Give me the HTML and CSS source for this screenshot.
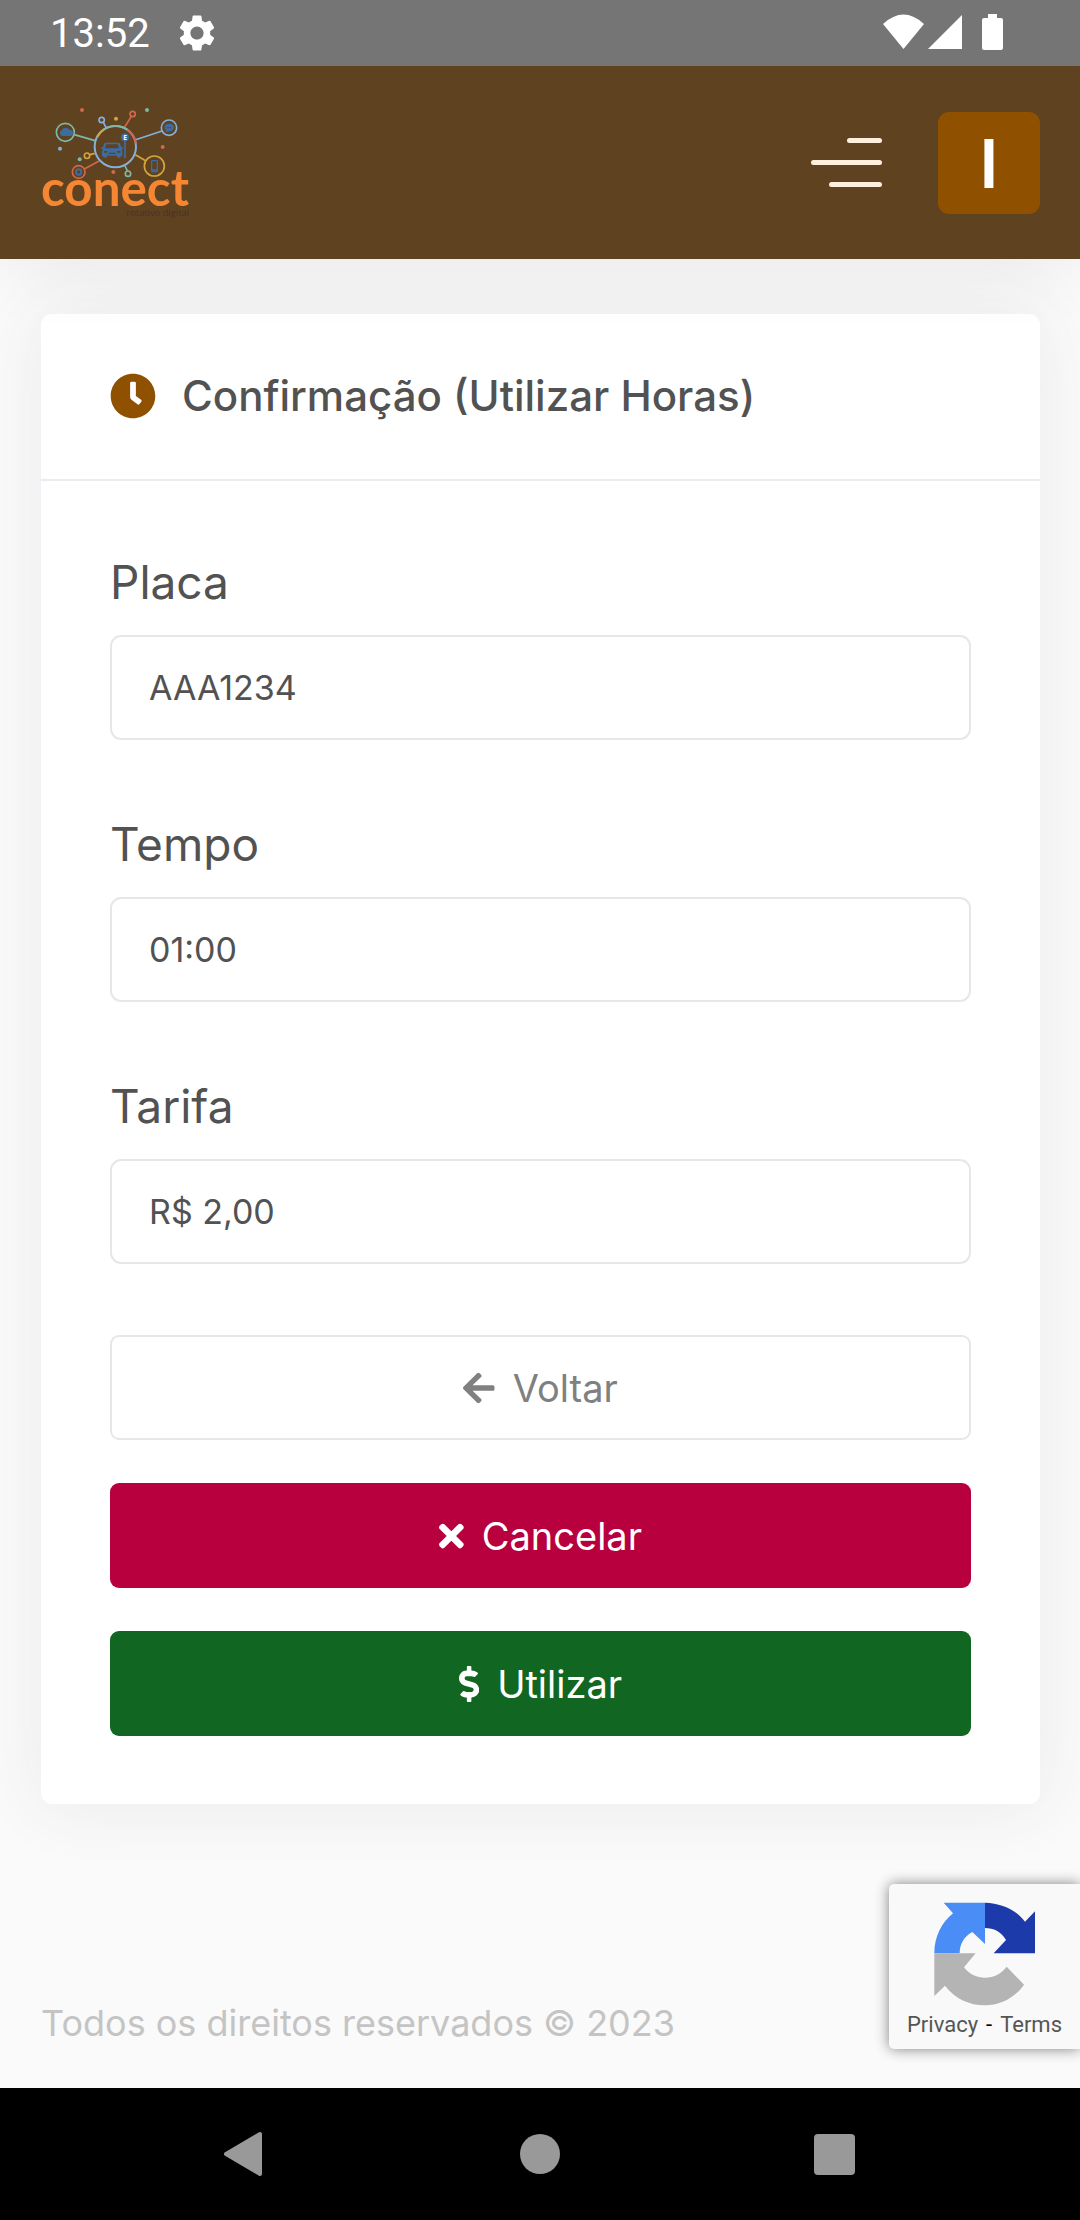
FILE: index.html
```html
<!DOCTYPE html>
<html lang="pt-BR">

<head>
    <meta charset="UTF-8">
    <meta name="viewport" content="width=device-width, initial-scale=1.0">
    <title>Conect - Utilizar Horas</title>
    <link rel="stylesheet" href="styles.css">
</head>

<body>
    <div class="status-bar">
        <span class="status-time">13:52</span>
        <svg class="status-gear" viewBox="0 0 24 24" fill="#fff"><path d="M19.14 12.94c.04-.3.06-.61.06-.94 0-.32-.02-.64-.07-.94l2.03-1.58c.18-.14.23-.41.12-.61l-1.92-3.32c-.12-.22-.37-.29-.59-.22l-2.39.96c-.5-.38-1.03-.7-1.62-.94l-.36-2.54c-.04-.24-.24-.41-.48-.41h-3.84c-.24 0-.43.17-.47.41l-.36 2.54c-.59.24-1.13.57-1.62.94l-2.39-.96c-.22-.08-.47 0-.59.22L2.74 8.87c-.12.21-.08.47.12.61l2.03 1.58c-.05.3-.09.63-.09.94s.02.64.07.94l-2.03 1.58c-.18.14-.23.41-.12.61l1.92 3.32c.12.22.37.29.59.22l2.39-.96c.5.38 1.03.7 1.62.94l.36 2.54c.05.24.24.41.48.41h3.84c.24 0 .44-.17.47-.41l.36-2.54c.59-.24 1.13-.56 1.62-.94l2.39.96c.22.08.47 0 .59-.22l1.92-3.32c.12-.22.07-.47-.12-.61l-2.01-1.58zM12 15.6c-1.98 0-3.6-1.62-3.6-3.6s1.62-3.6 3.6-3.6 3.6 1.62 3.6 3.6-1.62 3.6-3.6 3.6z"/></svg>
        <svg class="status-icons" viewBox="0 0 122 38" fill="#fff">
            <path d="M0 10Q20.500-9 41 10L20.500 35z"/>
            <path d="M79 1v34H45z"/>
            <path d="M105 0h9v4h4q2 0 2 2v28q0 2-2 2h-17q-2 0-2-2V6q0-2 2-2h4z"/>
        </svg>
    </div>

    <header class="header">
        <a class="logo" href="#" aria-label="Conect rotativo digital">
            <svg viewBox="33 48 444 336" fill="none">
                <g stroke-width="5">
                    <g stroke="#7fb8a4">
                        <path d="M133 131l62 18M285 225l7 14"/>
                        <circle cx="106" cy="124" r="27"/>
                        <circle cx="294" cy="248" r="8"/>
                    </g>
                    <g stroke="#85b0dc">
                        <path d="M228 109l-8-15M317 146l79-26"/>
                        <circle cx="215" cy="87" r="8"/>
                        <circle cx="417" cy="110" r="23"/>
                    </g>
                    <g stroke="#cf684c">
                        <path d="M284 108l20-32M207 210l-44 24"/>
                        <circle cx="308" cy="69" r="8"/>
                        <circle cx="146" cy="243" r="19"/>
                    </g>
                    <g stroke="#d3a53c">
                        <path d="M194 187l-14 4M316 191l31 18"/>
                        <circle cx="171" cy="194" r="8"/>
                        <circle cx="373" cy="225" r="30"/>
                    </g>
                </g>
                <g stroke-width="6">
                    <circle cx="256" cy="167" r="62" stroke="#85b0dc"/>
                    <path d="M202 137A62 62 0 0 1 222 115" stroke="#d3a53c"/>
                    <path d="M222 115A62 62 0 0 1 292 116" stroke="#7fb8a4"/>
                    <path d="M292 116A62 62 0 0 1 317 157" stroke="#cf684c"/>
                </g>
                <circle cx="156" cy="57" r="6" fill="#cf684c"/>
                <circle cx="398" cy="168" r="6" fill="#cf684c"/>
                <circle cx="250" cy="243" r="6" fill="#cf684c"/>
                <circle cx="351" cy="57" r="6" fill="#7fb8a4"/>
                <circle cx="149" cy="205" r="6" fill="#7fb8a4"/>
                <circle cx="258" cy="83" r="6" fill="#d3a53c"/>
                <circle cx="90" cy="173" r="6" fill="#85b0dc"/>
                <!-- cloud, chat, camera, phone -->
                <path d="M97 135a9 9 0 0 1-2-17 13 13 0 0 1 23-2 9 9 0 0 1 2 19z" fill="#3d6ca3"/>
                <path d="M417 98c9 0 15 5 15 11s-6 12-15 12l-10 3 1-6c-9-9-3-20 9-20z" fill="#3d6ca3"/>
                <path d="M410 110h14" stroke="#5f4220" stroke-width="3" stroke-dasharray="3 2"/>
                <circle cx="146" cy="243" r="8" stroke="#3d6ca3" stroke-width="6"/>
                <rect x="365" y="209" width="17" height="33" rx="2" stroke="#3d6ca3" stroke-width="4"/>
                <path d="M365 237h17" stroke="#3d6ca3" stroke-width="5"/>
                <!-- car and parking sign -->
                <path fill="#3d6ca3" fill-rule="evenodd" d="M224 155h44l7 14h4v6h-4l2 7v14h-6v4h-9v-6h-32v6h-9v-4h-5v-14l3-7h-5v-6h4zM229 160l-4 12h42l-4-12zM222 180v5h9v-5zM262 180v5h9v-5zM235 185v4h22v-4z"/>
                <path d="M285 140v62" stroke="#3d6ca3" stroke-width="5"/>
                <circle cx="285" cy="139" r="12" fill="#3d6ca3"/>
                <text class="logo-sign" x="285" y="146" text-anchor="middle">E</text>
                <text class="logo-name" x="477" y="346" text-anchor="end">conect</text>
                <text class="logo-sub" x="477" y="375" text-anchor="end">rotativo digital</text>
            </svg>
        </a>
        <div class="header-actions">
            <button class="menu-btn" type="button" aria-label="Menu">
                <span class="line short"></span>
                <span class="line"></span>
                <span class="line medium"></span>
            </button>
            <button class="user-btn" type="button">I</button>
        </div>
    </header>

    <main class="content">
        <form class="card">
            <div class="card-header">
                <svg class="clock" viewBox="0 0 512 512" fill="#8f5000"><path d="M256,8C119,8,8,119,8,256S119,504,256,504,504,393,504,256,393,8,256,8Zm92.490,313h0l-20,25a16,16,0,0,1-22.490,2.500h0l-67-49.720a40,40,0,0,1-15-31.230V112a16,16,0,0,1,16-16h32a16,16,0,0,1,16,16V256l58,42.500A16,16,0,0,1,348.490,321Z"/></svg>
                <h1>Confirmação (Utilizar Horas)</h1>
            </div>
            <div class="card-body">
                <div class="field">
                    <label for="placa">Placa</label>
                    <input type="text" id="placa" value="AAA1234" readonly>
                </div>
                <div class="field">
                    <label for="tempo">Tempo</label>
                    <input type="text" id="tempo" value="01:00" readonly>
                </div>
                <div class="field">
                    <label for="tarifa">Tarifa</label>
                    <input type="text" id="tarifa" value="R$ 2,00" readonly>
                </div>
                <div class="actions">
                    <button class="btn btn-back" type="button">
                        <svg viewBox="0 0 448 512" fill="currentColor"><path d="M257.500 445.100l-22.200 22.200c-9.400 9.400-24.600 9.400-33.900 0L7 273c-9.400-9.400-9.400-24.600 0-33.900L201.400 44.700c9.400-9.400 24.600-9.400 33.900 0l22.200 22.200c9.500 9.500 9.300 25-.4 34.300L136.600 216H424c13.300 0 24 10.700 24 24v32c0 13.300-10.700 24-24 24H136.600l120.500 114.800c9.800 9.300 10 24.800.4 34.300z"/></svg>
                        Voltar
                    </button>
                    <button class="btn btn-cancel" type="button">
                        <svg viewBox="0 0 352 512" fill="currentColor"><path d="M242.720 256l100.070-100.070c12.280-12.280 12.280-32.190 0-44.480l-22.240-22.240c-12.280-12.280-32.190-12.280-44.480 0L176 189.280 75.930 89.210c-12.280-12.280-32.190-12.280-44.480 0L9.210 111.450c-12.280 12.280-12.280 32.190 0 44.480L109.280 256 9.210 356.070c-12.280 12.280-12.280 32.190 0 44.480l22.240 22.240c12.280 12.280 32.200 12.280 44.480 0L176 322.720l100.070 100.070c12.280 12.280 32.200 12.280 44.480 0l22.240-22.240c12.280-12.280 12.280-32.190 0-44.480L242.720 256z"/></svg>
                        Cancelar
                    </button>
                    <button class="btn btn-use" type="submit">
                        <svg viewBox="0 0 288 512" fill="currentColor"><path d="M209.200 233.400l-108-31.600C88.700 198.200 80 186.500 80 173.500c0-16.300 13.200-29.500 29.500-29.500h66.300c12.200 0 24.200 3.700 34.200 10.500 6.100 4.100 14.300 3.100 19.500-2l34.800-34c7.100-6.900 6.100-18.400-1.800-24.500C238 74.800 207.400 64.100 176 64V16c0-8.800-7.200-16-16-16h-32c-8.800 0-16 7.200-16 16v48h-2.500C45.800 64-5.400 118.700.5 183.600c4.200 46.100 39.400 83.600 83.800 96.600l102.500 30c12.500 3.700 21.200 15.300 21.200 28.300 0 16.300-13.200 29.500-29.500 29.500h-66.300C100 368 88 364.300 78 357.500c-6.100-4.100-14.300-3.100-19.500 2l-34.800 34c-7.100 6.900-6.100 18.400 1.800 24.500 24.500 19.200 55.100 29.900 86.500 30v48c0 8.800 7.200 16 16 16h32c8.800 0 16-7.200 16-16v-48.200c46.600-.9 90.300-28.600 105.700-72.700 21.500-61.600-14.600-124.800-72.500-141.700z"/></svg>
                        Utilizar
                    </button>
                </div>
            </div>
        </form>
    </main>

    <footer class="footer">
        <p>Todos os direitos reservados © 2023</p>
        <div class="captcha">
            <svg viewBox="283 186 306 312">
                <path fill="#4a8df6" d="M312 188H436V312L398 276C373 290 360 312 360 340H284C284 290 306 248 340 220Z"/>
                <path fill="#1c3aa9" d="M436 188C485 189 530 210 556 245L586 214V340H462L499 300C484 275 462 264 436 264Z"/>
                <path fill="#b4b4b4" d="M284 340H408L373 382C390 404 412 413 436 413 462 413 484 402 501 380L553 434C525 474 482 496 436 496 390 496 345 476 316 437L284 468Z"/>
            </svg>
            <div class="captcha-links"><a href="#">Privacy</a><span>-</span><a href="#">Terms</a></div>
        </div>
    </footer>

    <nav class="nav-bar">
        <button type="button" aria-label="Voltar"><svg viewBox="0 0 48 48"><path d="M5 24L39 4V44Z" fill="#999" stroke="#999" stroke-width="4" stroke-linejoin="round"/></svg></button>
        <button type="button" aria-label="Início"><svg viewBox="0 0 48 48"><circle cx="24" cy="24" r="20" fill="#999"/></svg></button>
        <button type="button" aria-label="Recentes"><svg viewBox="0 0 48 48"><rect x="3" y="4" width="41" height="41" rx="4" fill="#999"/></svg></button>
    </nav>
</body>

</html>
```
FILE: styles.css
```css
* {
    box-sizing: border-box;
}

body {
    margin: 0;
    min-height: 100vh;
    display: flex;
    flex-direction: column;
    font-family: Inter, "Open Sans", sans-serif;
    font-size: 36px;
    background-color: #fafafa;
    color: #525252;
}

button {
    font-family: inherit;
    border: none;
    padding: 0;
    cursor: pointer;
}

svg {
    display: block;
}

/* status bar */
.status-bar {
    display: flex;
    align-items: center;
    height: 66px;
    padding: 0 75px 0 50px;
    background-color: #757575;
    color: #fff;
    font-family: Roboto, sans-serif;
    font-size: 40px;
    z-index: 2;
}

.status-gear {
    width: 44px;
    height: 44px;
    margin-left: 25px;
}

.status-icons {
    width: 122px;
    height: 38px;
    margin-left: auto;
}

/* header */
.header {
    display: flex;
    align-items: center;
    justify-content: space-between;
    height: 193px;
    padding: 0 40px 0 41px;
    background-color: #5f4220;
    box-shadow: 0 0 80px rgba(0, 0, 0, 0.09);
    z-index: 1;
}

.logo svg {
    width: 148px;
    height: 112px;
}

.logo-name {
    font: bold 148px Lato, sans-serif;
    fill: #f58634;
}

.logo-sub {
    font: 28px "Open Sans", sans-serif;
    fill: #40352c;
}

.logo-sign {
    font: bold 20px "Open Sans", sans-serif;
    fill: #fff;
}

.header-actions {
    display: flex;
    align-items: center;
    gap: 56px;
}

.menu-btn {
    display: flex;
    flex-direction: column;
    align-items: flex-end;
    gap: 17px;
    width: 71px;
    background: none;
}

.line {
    width: 100%;
    height: 5px;
    border-radius: 3px;
    background-color: #feeedd;
}

.line.short {
    width: 50%;
}

.line.medium {
    width: 75%;
}

.user-btn {
    width: 102px;
    height: 102px;
    border-radius: 11px;
    background-color: #8f5000;
    color: #fff;
    font-size: 68px;
    font-weight: 600;
}

/* card */
.content {
    flex: 1;
    padding: 55px 40px 55px 41px;
}

.card {
    background-color: #fff;
    border-radius: 11px;
    box-shadow: 0 0 68px rgba(82, 63, 105, 0.09);
}

.card-header {
    display: flex;
    align-items: center;
    gap: 26px;
    height: 167px;
    padding: 0 69px 2px;
    border-bottom: 2px solid #ebebf0;
}

.card-header h1 {
    margin: 0;
    font-size: 42px;
    font-weight: 500;
}

.clock {
    width: 46px;
    height: 46px;
}

.card-body {
    padding: 68px 69px;
}

.field {
    margin-bottom: 71px;
}

.field label {
    display: block;
    margin-bottom: 20px;
    font-size: 46px;
    line-height: 66px;
}

.field input {
    display: block;
    width: 100%;
    height: 105px;
    padding: 0 37px;
    border: 2px solid #e7e7e7;
    border-radius: 11px;
    background-color: #fff;
    color: #525252;
    font-family: inherit;
    font-size: 34px;
}

.actions {
    display: flex;
    flex-direction: column;
    gap: 43px;
}

.btn {
    display: flex;
    align-items: center;
    justify-content: center;
    gap: 18px;
    height: 105px;
    border-radius: 9px;
    color: #fff;
    font-size: 38px;
}

.btn svg {
    height: 36px;
}

.btn-back {
    border: 2px solid #e7e7e7;
    background-color: #fff;
    color: #808080;
}

.btn-cancel {
    background-color: #b7003d;
}

.btn-use {
    background-color: #116622;
}

/* footer */
.footer {
    position: relative;
    padding: 0 41px 38px;
    color: #c4c4c4;
}

.footer p {
    margin: 0;
    line-height: 54px;
}

.captcha {
    position: absolute;
    right: 0;
    bottom: 39px;
    display: flex;
    flex-direction: column;
    align-items: center;
    gap: 6px;
    width: 191px;
    height: 165px;
    padding-top: 18px;
    border-radius: 5px 0 0 5px;
    background-color: #f9f9f9;
    box-shadow: 0 0 14px #808080;
    color: #000;
    font-family: Roboto, sans-serif;
    font-size: 22px;
}

.captcha svg {
    width: 102px;
    height: 104px;
}

.captcha-links {
    display: flex;
    gap: 8px;
}

.captcha-links a {
    color: #555;
    text-decoration: none;
}

/* navigation bar */
.nav-bar {
    display: flex;
    align-items: center;
    justify-content: center;
    gap: 247px;
    height: 132px;
    background-color: #000;
}

.nav-bar button {
    width: 48px;
    height: 48px;
    background: none;
}
```
